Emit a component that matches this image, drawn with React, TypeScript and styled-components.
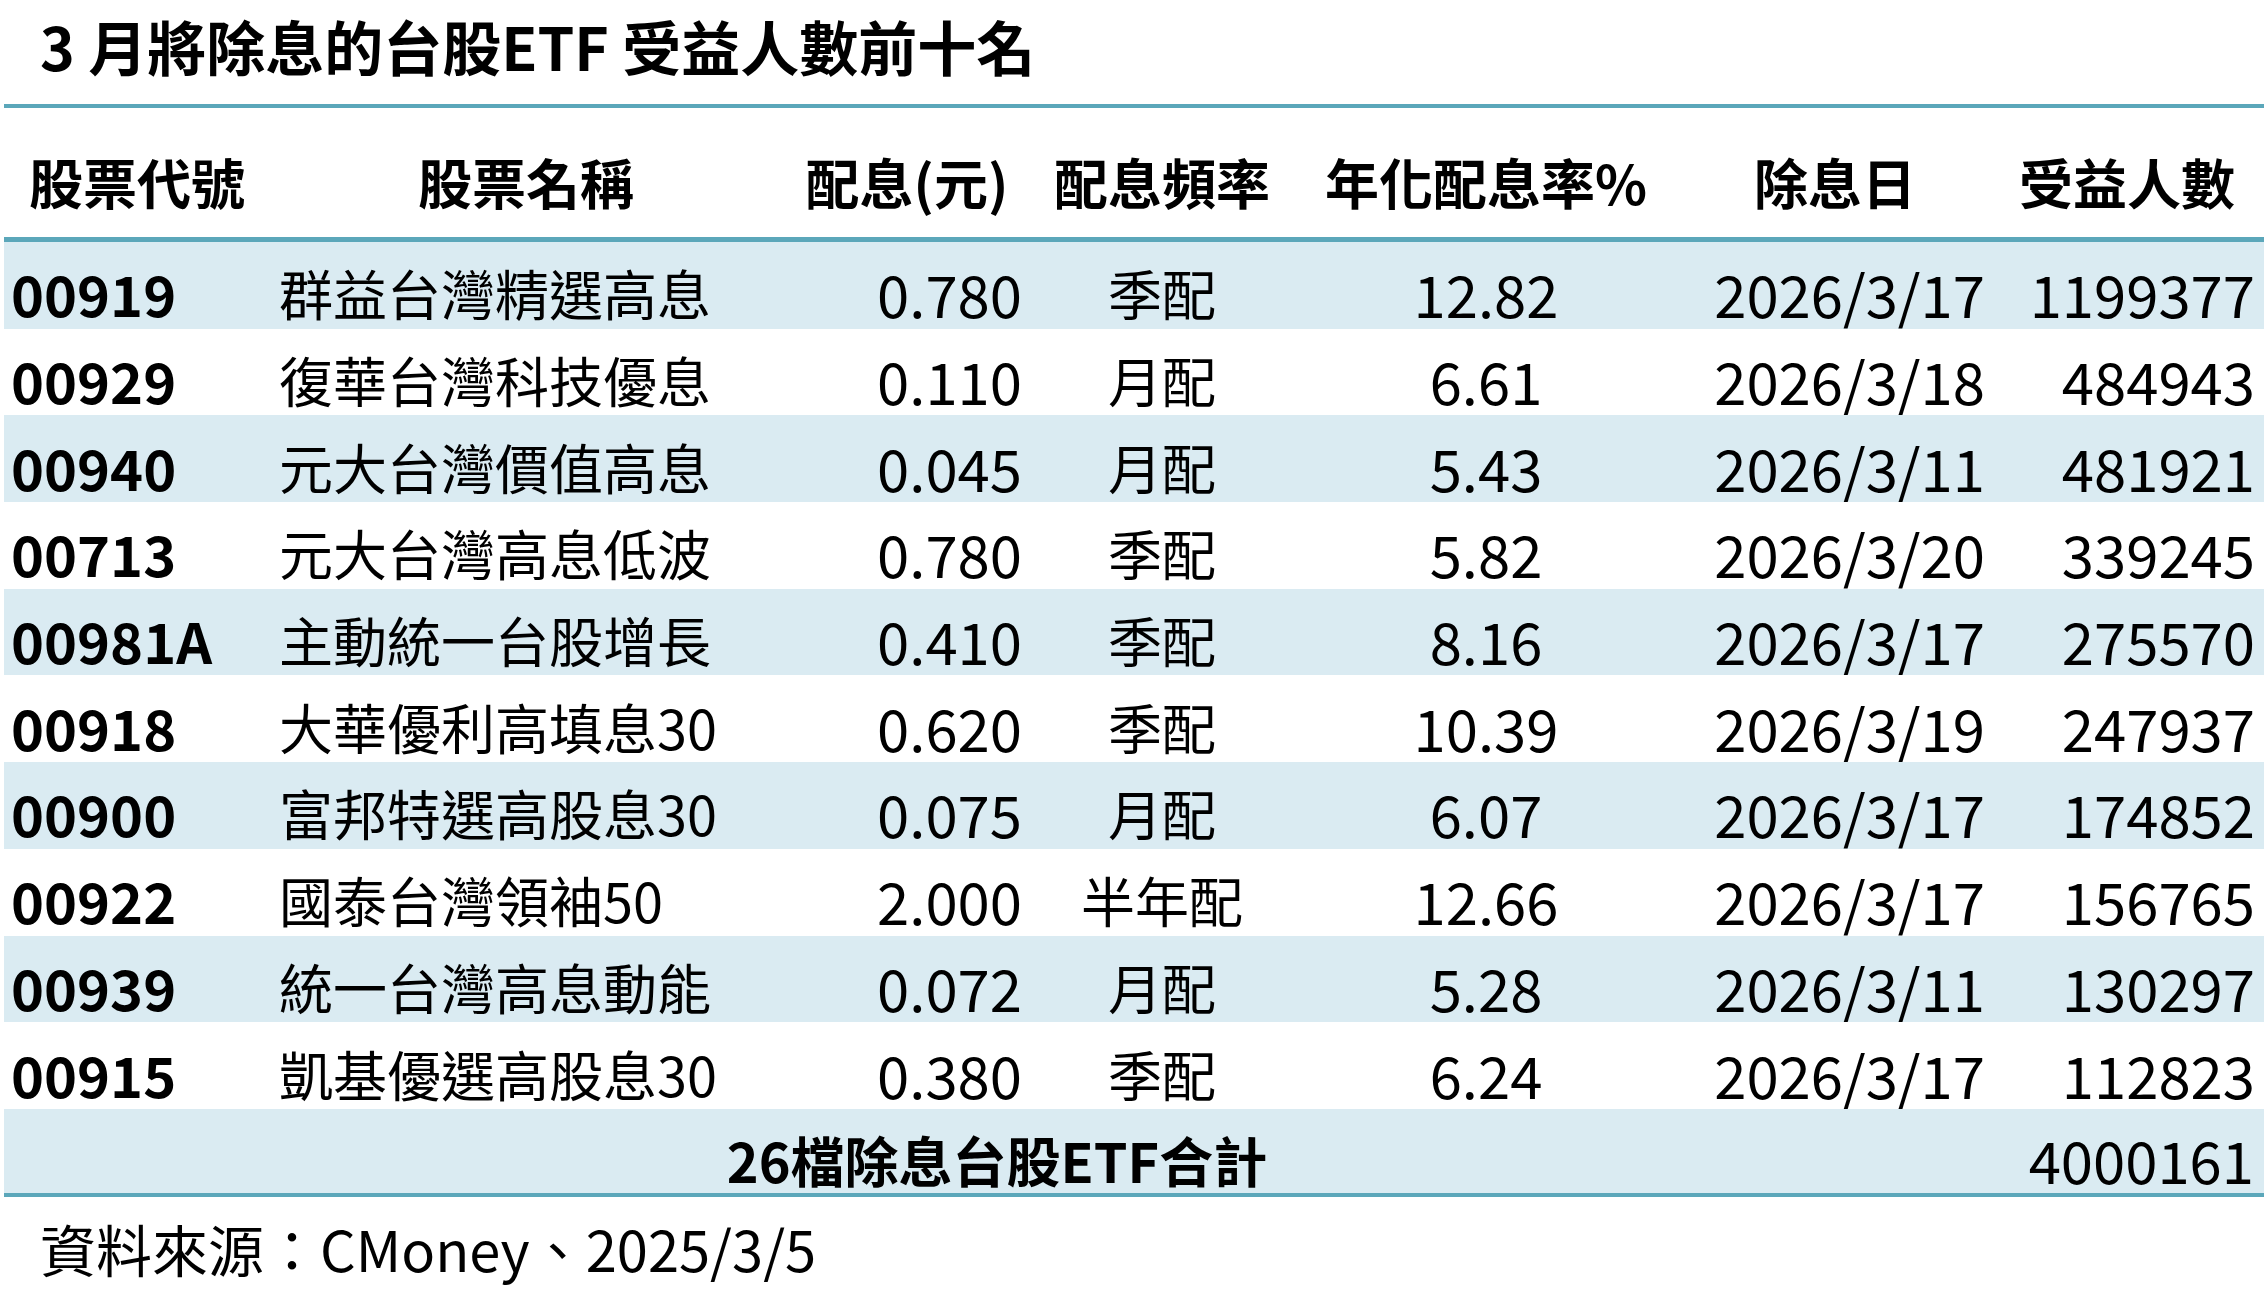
import React from "react";
import styled, { createGlobalStyle } from "styled-components";

const GlobalStyle = createGlobalStyle`
  html, body {
    margin: 0;
    padding: 0;
    background: #ffffff;
  }
  body {
    font-family: "Noto Sans CJK TC", "Noto Sans", sans-serif;
    color: #000000;
  }
`;

const TEAL = "#5ba7ba";
const BAND = "#daebf2";

const Page = styled.div`
  width: 2267px;
  height: 1312px;
  display: flex;
  flex-direction: column;
  box-sizing: border-box;
  padding-left: 4px;
`;

const Title = styled.h1`
  margin: 0;
  height: 104px;
  box-sizing: border-box;
  padding: 11px 0 0 36px;
  font-size: 59px;
  font-weight: 700;
  line-height: 1.2;
  white-space: nowrap;
`;

const Table = styled.div`
  width: 2260px;
  display: flex;
  flex-direction: column;
  border-top: 4px solid ${TEAL};
`;

const COLS = "266px 512px 250px 260px 388px 310px 274px";

const HeaderRow = styled.div`
  display: grid;
  grid-template-columns: ${COLS};
  height: 129px;
  border-bottom: 5px solid ${TEAL};
`;

const HeadCell = styled.div`
  display: flex;
  align-items: center;
  justify-content: center;
  padding-top: 18px;
  box-sizing: border-box;
  font-size: 54px;
  font-weight: 700;
  white-space: nowrap;
`;

const Row = styled.div<{ $band: boolean }>`
  display: grid;
  grid-template-columns: ${COLS};
  height: 86.7px;
  background: ${(p) => (p.$band ? BAND : "#ffffff")};
`;

type Align = "left" | "center" | "right";

const Cell = styled.div<{ $align: Align; $num?: boolean; $bold?: boolean; $pl?: number; $pr?: number }>`
  display: flex;
  align-items: center;
  justify-content: ${(p) => (p.$align === "left" ? "flex-start" : p.$align === "right" ? "flex-end" : "center")};
  padding-top: 16px;
  padding-left: ${(p) => p.$pl ?? 0}px;
  padding-right: ${(p) => p.$pr ?? 0}px;
  box-sizing: border-box;
  font-size: ${(p) => (p.$bold ? 56 : p.$num ? 58 : 54)}px;
  font-weight: ${(p) => (p.$bold ? 700 : 400)};
  white-space: nowrap;
  line-height: 1;
`;

const TotalRow = styled.div`
  display: grid;
  grid-template-columns: 1986px 274px;
  height: 84px;
  background: ${BAND};
  border-bottom: 4px solid ${TEAL};
`;

const TotalLabel = styled.div`
  display: flex;
  align-items: center;
  justify-content: center;
  padding-top: 18px;
  box-sizing: border-box;
  font-size: 54px;
  font-weight: 700;
  white-space: nowrap;
  line-height: 1;
`;

const Footnote = styled.div`
  padding: 17px 0 0 36px;
  font-size: 56px;
  font-weight: 400;
  white-space: nowrap;
  line-height: 1.2;
`;

type Item = {
  code: string;
  name: string;
  div: string;
  freq: string;
  rate: string;
  date: string;
  holders: string;
};

const data: Item[] = [
  { code: "00919", name: "群益台灣精選高息", div: "0.780", freq: "季配", rate: "12.82", date: "2026/3/17", holders: "1199377" },
  { code: "00929", name: "復華台灣科技優息", div: "0.110", freq: "月配", rate: "6.61", date: "2026/3/18", holders: "484943" },
  { code: "00940", name: "元大台灣價值高息", div: "0.045", freq: "月配", rate: "5.43", date: "2026/3/11", holders: "481921" },
  { code: "00713", name: "元大台灣高息低波", div: "0.780", freq: "季配", rate: "5.82", date: "2026/3/20", holders: "339245" },
  { code: "00981A", name: "主動統一台股增長", div: "0.410", freq: "季配", rate: "8.16", date: "2026/3/17", holders: "275570" },
  { code: "00918", name: "大華優利高填息30", div: "0.620", freq: "季配", rate: "10.39", date: "2026/3/19", holders: "247937" },
  { code: "00900", name: "富邦特選高股息30", div: "0.075", freq: "月配", rate: "6.07", date: "2026/3/17", holders: "174852" },
  { code: "00922", name: "國泰台灣領袖50", div: "2.000", freq: "半年配", rate: "12.66", date: "2026/3/17", holders: "156765" },
  { code: "00939", name: "統一台灣高息動能", div: "0.072", freq: "月配", rate: "5.28", date: "2026/3/11", holders: "130297" },
  { code: "00915", name: "凱基優選高股息30", div: "0.380", freq: "季配", rate: "6.24", date: "2026/3/17", holders: "112823" },
];

const headers = ["股票代號", "股票名稱", "配息(元)", "配息頻率", "年化配息率%", "除息日", "受益人數"];

export default function App() {
  return (
    <>
      <GlobalStyle />
      <Page>
        <Title>3 月將除息的台股ETF 受益人數前十名</Title>
        <Table>
          <HeaderRow>
            {headers.map((h) => (
              <HeadCell key={h}>{h}</HeadCell>
            ))}
          </HeaderRow>
          {data.map((d, i) => (
            <Row key={d.code} $band={i % 2 === 0}>
              <Cell $align="left" $num $bold $pl={7}>{d.code}</Cell>
              <Cell $align="left" $pl={9}>{d.name}</Cell>
              <Cell $align="right" $num $pr={10}>{d.div}</Cell>
              <Cell $align="center">{d.freq}</Cell>
              <Cell $align="center" $num>{d.rate}</Cell>
              <Cell $align="right" $num $pr={5}>{d.date}</Cell>
              <Cell $align="right" $num $pr={9}>{d.holders}</Cell>
            </Row>
          ))}
          <TotalRow>
            <TotalLabel>26檔除息台股ETF合計</TotalLabel>
            <Cell $align="right" $num $pr={10}>4000161</Cell>
          </TotalRow>
        </Table>
        <Footnote>資料來源：CMoney、2025/3/5</Footnote>
      </Page>
    </>
  );
}
